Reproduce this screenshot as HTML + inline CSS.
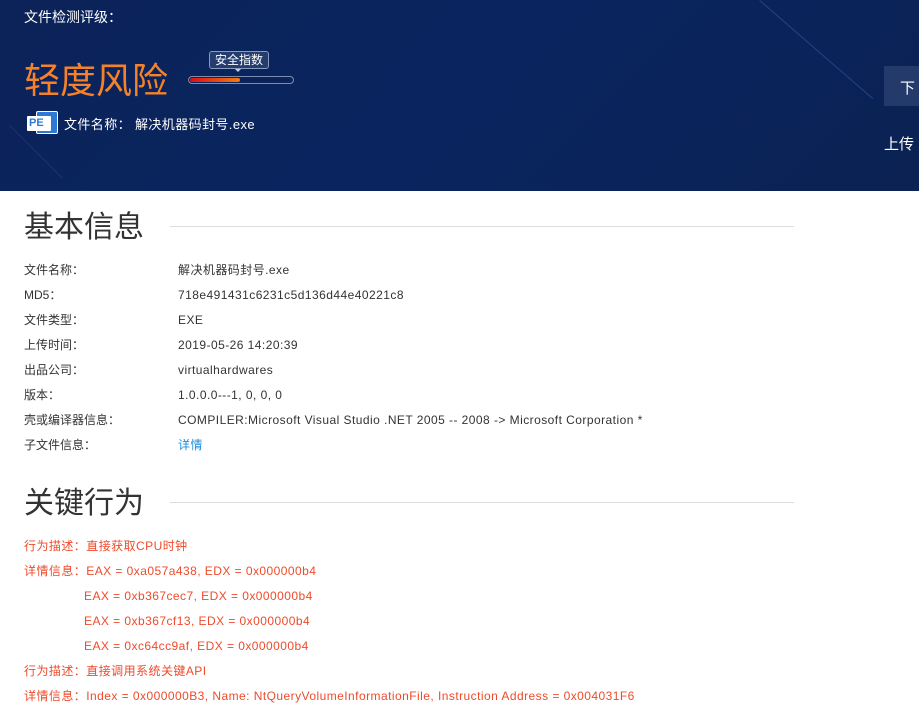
<!DOCTYPE html>
<html><head><meta charset="utf-8"><style>
*{margin:0;padding:0;box-sizing:border-box}
body{width:919px;height:704px;overflow:hidden;background:#fff;font-family:"Liberation Sans","Noto Sans CJK SC",sans-serif;position:relative}
.hd{position:absolute;left:0;top:0;width:919px;height:191px;background:linear-gradient(135deg,#0b2358 0%,#0a2460 50%,#0b2252 100%);overflow:hidden}
.a{position:absolute;white-space:nowrap}
.row{position:absolute;left:24px;font-size:12px;color:#333;height:16px;line-height:16px}
.row span{position:absolute;left:154px;white-space:nowrap;letter-spacing:.45px}
.h2{position:absolute;left:24px;font-size:30px;color:#333;line-height:36px}
.ln{position:absolute;left:170px;width:624px;height:1px;background:#ddd}
.r{position:absolute;font-size:12px;color:#ee4b2b;white-space:nowrap;line-height:16px;letter-spacing:.45px}
</style></head><body>
<div class="hd">
<div class="a" style="left:10px;top:125px;width:75px;height:1px;transform:rotate(45deg);transform-origin:0 0;background:rgba(60,100,180,.25)"></div>
<div class="a" style="left:760px;top:0;width:150px;height:1px;transform:rotate(41deg);transform-origin:0 0;background:rgba(60,110,190,.45)"></div>
<div class="a" style="left:24px;top:7px;font-size:14px;color:#fff">文件检测评级：</div>
<div class="a" style="left:24px;top:58px;font-size:36px;color:#f5822a;line-height:46px">轻度风险</div>
<div class="a" style="left:209px;top:51px;width:60px;height:18px;border:1px solid #8a9bbd;border-radius:3px;background:#243d6e;color:#fff;font-size:12px;line-height:16px;text-align:center">安全指数</div>
<div class="a" style="left:235px;top:69px;width:0;height:0;border-left:3px solid transparent;border-right:3px solid transparent;border-top:3px solid #ccd"></div>
<div class="a" style="left:188px;top:76px;width:106px;height:8px;border:1px solid #7d8db0;border-radius:4px;background:#0b2358"></div>
<div class="a" style="left:190px;top:78px;width:50px;height:4px;border-radius:2px;background:linear-gradient(90deg,#d8101a,#f57a10)"></div>
<div class="a" style="left:36px;top:111px;width:22px;height:23px;background:#2d7ad6;border:1px solid #fff;border-radius:2px"></div>
<div class="a" style="left:27px;top:116px;width:24px;height:15px;background:#fff;border-radius:1px"></div>
<div class="a" style="left:29px;top:116px;font-size:11px;font-weight:bold;color:#2d7ad6;line-height:15px">PE</div>
<div class="a" style="left:64px;top:114px;font-size:13px;color:#fff;letter-spacing:.4px">文件名称：&nbsp;解决机器码封号.exe</div>
<div class="a" style="left:884px;top:66px;width:40px;height:40px;background:#243a6a"></div>
<div class="a" style="left:900px;top:77px;font-size:15px;color:#fff">下</div>
<div class="a" style="left:884px;top:133px;font-size:15px;color:#fff">上传</div>
</div>
<div class="h2" style="top:210px">基本信息</div><div class="ln" style="top:226px"></div>
<div class="row" style="top:262px">文件名称：<span>解决机器码封号.exe</span></div>
<div class="row" style="top:287px">MD5：<span>718e491431c6231c5d136d44e40221c8</span></div>
<div class="row" style="top:312px">文件类型：<span>EXE</span></div>
<div class="row" style="top:337px">上传时间：<span>2019-05-26 14:20:39</span></div>
<div class="row" style="top:362px">出品公司：<span>virtualhardwares</span></div>
<div class="row" style="top:387px">版本：<span>1.0.0.0---1, 0, 0, 0</span></div>
<div class="row" style="top:412px">壳或编译器信息：<span>COMPILER:Microsoft Visual Studio .NET 2005 -- 2008 -&gt; Microsoft Corporation *</span></div>
<div class="row" style="top:437px">子文件信息：<span style="color:#1a8fe0">详情</span></div>
<div class="h2" style="top:486px">关键行为</div><div class="ln" style="top:502px"></div>
<div class="r" style="left:24px;top:538px">行为描述：直接获取CPU时钟</div>
<div class="r" style="left:24px;top:563px">详情信息：EAX = 0xa057a438, EDX = 0x000000b4</div>
<div class="r" style="left:84px;top:588px">EAX = 0xb367cec7, EDX = 0x000000b4</div>
<div class="r" style="left:84px;top:613px">EAX = 0xb367cf13, EDX = 0x000000b4</div>
<div class="r" style="left:84px;top:638px">EAX = 0xc64cc9af, EDX = 0x000000b4</div>
<div class="r" style="left:24px;top:663px">行为描述：直接调用系统关键API</div>
<div class="r" style="left:24px;top:688px">详情信息：Index = 0x000000B3, Name: NtQueryVolumeInformationFile, Instruction Address = 0x004031F6</div>
</body></html>
